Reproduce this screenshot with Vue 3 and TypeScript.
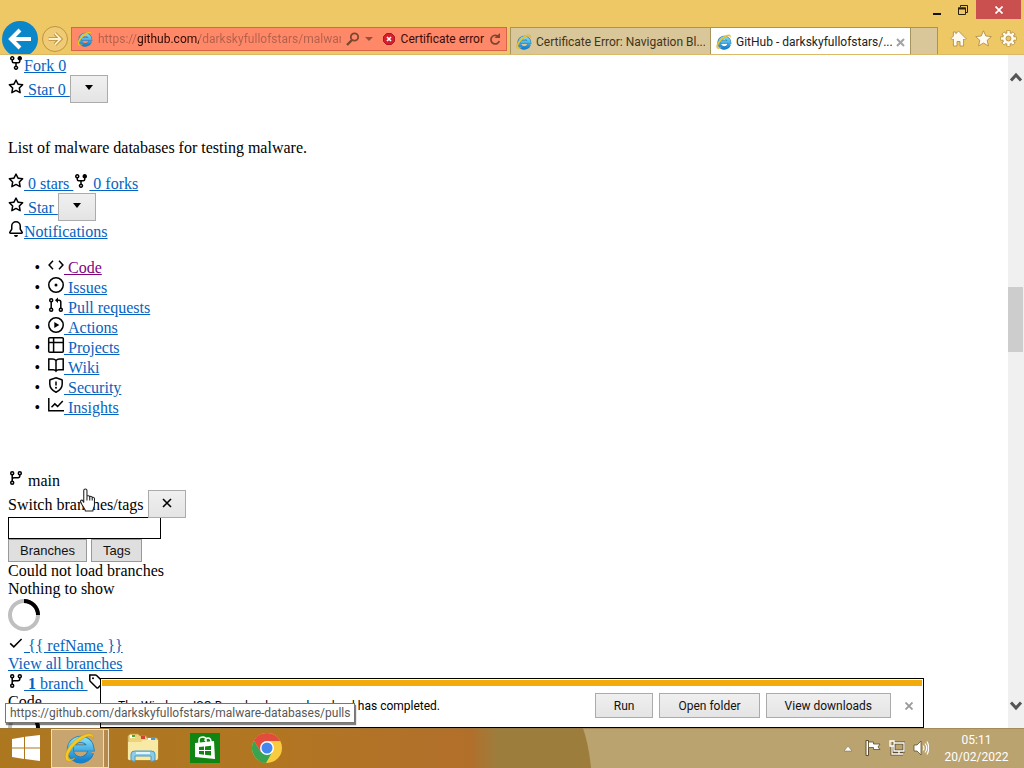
<script setup lang="ts">
import { ref } from 'vue'

interface NavItem {
  label: string
  icon: string
  visited?: boolean
}

const icons: Record<string, string> = {
  fork: '<path d="M5 3.25a.75.75 0 11-1.5 0 .75.75 0 011.5 0zm0 2.122a2.25 2.25 0 10-1.5 0v.878A2.25 2.25 0 005.75 8.5h1.5v2.128a2.251 2.251 0 101.5 0V8.5h1.5a2.25 2.25 0 002.25-2.25v-.878a2.25 2.25 0 10-1.5 0v.878a.75.75 0 01-.75.75h-4.5A.75.75 0 015 6.25v-.878zm3.75 7.378a.75.75 0 11-1.5 0 .75.75 0 011.5 0zm3-8.75a.75.75 0 100-1.5.75.75 0 000 1.5z"/>',
  star: '<path fill-rule="evenodd" d="M8 .25a.75.75 0 01.673.418l1.882 3.815 4.21.612a.75.75 0 01.416 1.279l-3.046 2.97.719 4.192a.75.75 0 01-1.088.791L8 12.347l-3.766 1.98a.75.75 0 01-1.088-.79l.72-4.194L.818 6.374a.75.75 0 01.416-1.28l4.21-.611L7.327.668A.75.75 0 018 .25zm0 2.445L6.615 5.5a.75.75 0 01-.564.41l-3.097.45 2.24 2.184a.75.75 0 01.216.664l-.528 3.084 2.769-1.456a.75.75 0 01.698 0l2.77 1.456-.53-3.084a.75.75 0 01.216-.664l2.24-2.183-3.096-.45a.75.75 0 01-.564-.41L8 2.694v.001z"/>',
  bell: '<path d="M8 16a2 2 0 001.985-1.75c.017-.137-.097-.25-.235-.25h-3.5c-.138 0-.252.113-.235.25A2 2 0 008 16z"/><path fill-rule="evenodd" d="M8 1.5A3.5 3.5 0 004.5 5v2.947c0 .346-.102.683-.294.97l-1.703 2.556c-.01.015.001.027.018.027h10.964c.017 0 .024-.015.014-.027l-1.703-2.554a1.75 1.75 0 01-.294-.97V5A3.5 3.5 0 008 1.5zM3 5a5 5 0 0110 0v2.947c0 .05.015.098.042.139l1.703 2.555A1.518 1.518 0 0113.482 13H2.518a1.518 1.518 0 01-1.263-2.36l1.703-2.554A.25.25 0 003 7.947V5z"/>',
  code: '<path class="line" d="M5 3.8L1.1 8 5 12.2M11 3.8L14.9 8 11 12.2"/>',
  issues: '<circle class="line" cx="8" cy="8" r="7.25"/><circle cx="8" cy="8" r="1.5"/>',
  pulls: '<g class="line"><circle cx="3.2" cy="3.2" r="1.5"/><circle cx="3.2" cy="12.8" r="1.5"/><circle cx="12.8" cy="12.8" r="1.5"/><path d="M3.2 4.7v6.6M12.8 11.3V5A1.8 1.8 0 0011 3.2H8"/></g><path d="M10 .5v5.4L7 3.2z"/>',
  actions: '<circle class="line" cx="8" cy="8" r="7.25"/><path d="M6.3 5l5 3-5 3z"/>',
  projects: '<path class="line" d="M1.7.8h12.6a1 1 0 011 1v12.4a1 1 0 01-1 1H1.7a1 1 0 01-1-1V1.8a1 1 0 011-1zM.8 5.6h14.4M5.6.8v14.4"/>',
  wiki: '<path class="line" d="M8 3.6C7 2.4 5.8 2 4.5 2H.8v10.8h4.4c1.2 0 2.2.5 2.8 1.4.6-.9 1.6-1.4 2.8-1.4h4.4V2h-3.7C10.200 2 9 2.400 8 3.600zM8 3.600v10.600"/>',
  security: '<path class="line" d="M8 .8l5.800 1.900a.6.6 0 01.4.6V7c0 3.700-2.300 6.500-6.200 8.200C4.100 13.500 1.800 10.700 1.800 7V3.300a.6.6 0 01.4-.6z"/><path class="line" d="M8 4.400v4"/><circle cx="8" cy="10.800" r="1"/>',
  insights: '<path class="line" d="M.8 1v12.700H16M3.500 10.300l3.300-3.400 2.800 2.500L14.800 4"/>',
  branch: '<g class="line"><circle cx="4.200" cy="3.200" r="1.500"/><circle cx="4.200" cy="12.800" r="1.500"/><circle cx="11.800" cy="3.200" r="1.500"/><path d="M4.200 4.700v6.600M4.200 9.500c0-1 .7-1.700 1.700-1.700H10c1.100 0 1.800-.7 1.800-1.700V4.700"/></g>',
  check: '<path class="line" d="M2.200 8.400l3.600 3.500 7.800-7.900"/>',
  tag: '<path class="line" d="M1.800 2h5.600c.5 0 .9.200 1.200.5l6.200 6.100a1 1 0 010 1.400l-4.700 4.700a1 1 0 01-1.400 0L2.400 8.500A2 2 0 011.800 7.200z"/><circle cx="5" cy="5.200" r="1"/>',
}

const navItems: NavItem[] = [
  { label: 'Code', icon: 'code', visited: true },
  { label: 'Issues', icon: 'issues' },
  { label: 'Pull requests', icon: 'pulls' },
  { label: 'Actions', icon: 'actions' },
  { label: 'Projects', icon: 'projects' },
  { label: 'Wiki', icon: 'wiki' },
  { label: 'Security', icon: 'security' },
  { label: 'Insights', icon: 'insights' },
]

const refTemplate = '{{ refName }}'
const address = ref('https://github.com/darkskyfullofstars/malware-databases')
const filter = ref('')
const downloadActions = ['Run', 'Open folder', 'View downloads']
</script>

<template>
  <svg class="defs" aria-hidden="true">
    <defs>
      <linearGradient id="ieBlue" x1="0" y1="0" x2="0" y2="1">
        <stop offset="0" stop-color="#7bdcf8" /><stop offset="1" stop-color="#1583cf" />
      </linearGradient>
      <symbol id="ie" viewBox="0 0 32 32">
        <path d="M26.500 20.500A10.300 10.300 0 1 1 26.800 16H10" fill="none" stroke="#2279b5" stroke-width="7" />
        <path d="M26.500 20.500A10.300 10.300 0 1 1 26.800 16H10" fill="none" stroke="url(#ieBlue)" stroke-width="5.400" />
        <path d="M3 29C-2 25 4 13 14 6 22 .5 31-.5 29 7c0-4-5-4-12 1C8 14 2 24 5 27c1 1 4 0 6-1-3 3-6 4-8 3z" fill="#f8ca20" stroke="#c69a20" stroke-width=".6" />
      </symbol>
    </defs>
  </svg>

  <div class="desktop">
    <header class="chrome">
      <div class="nav-buttons">
        <button class="back" aria-label="Back">
          <svg viewBox="0 0 36 36"><path d="M29 18H10M18 9l-9 9 9 9" fill="none" stroke="#fff" stroke-width="4" /></svg>
        </button>
        <button class="forward" aria-label="Forward">
          <svg viewBox="0 0 26 26"><path d="M6 13h12M13 7l6 6-6 6" fill="none" stroke="#b98e3b" stroke-width="4" /><path d="M6 13h12M13 7l6 6-6 6" fill="none" stroke="#fff0c8" stroke-width="2" /></svg>
        </button>
      </div>

      <form class="address-bar" @submit.prevent>
        <svg class="site-icon"><use href="#ie" /></svg>
        <input v-model="address" class="address" aria-label="Address" spellcheck="false" />
        <button class="bare" aria-label="Search">
          <svg width="14" height="14" viewBox="0 0 14 14"><circle cx="8.500" cy="5" r="3.700" fill="none" stroke="#7d4630" stroke-width="1.800" /><path d="M6 8l-5 5" stroke="#7d4630" stroke-width="2.400" /></svg>
        </button>
        <button class="bare" aria-label="Address suggestions">
          <svg width="8" height="14" viewBox="0 0 8 14"><path d="M0 5h8L4 9z" fill="#955039" /></svg>
        </button>
        <button class="certificate" type="button">
          <svg width="12" height="12" viewBox="0 0 12 12"><path d="M3.500.5h5l3 3v5l-3 3h-5l-3-3v-5z" fill="#d5202b" stroke="#b31620" /><path d="M4 4l4 4M8 4l-4 4" stroke="#fff" stroke-width="1.700" /></svg>
          Certificate error
        </button>
        <button class="bare" aria-label="Refresh">
          <svg width="12" height="13" viewBox="0 0 12 13"><path d="M8.500 3A4.300 4.300 0 1 0 10.300 8" fill="none" stroke="#7d4630" stroke-width="1.800" /><path d="M5.500 5H11V0z" fill="#7d4630" /></svg>
        </button>
      </form>

      <nav class="tabs" aria-label="Tabs">
        <button class="tab"><svg class="tab-icon"><use href="#ie" /></svg><span>Certificate Error: Navigation Bl...</span></button>
        <div class="tab active">
          <button class="tab-title"><svg class="tab-icon"><use href="#ie" /></svg><span>GitHub - darkskyfullofstars/...</span></button>
          <button class="bare" aria-label="Close tab"><svg width="9" height="9" viewBox="0 0 9 9"><path d="M1 1l7 7M8 1L1 8" stroke="#a3a3a3" stroke-width="2" /></svg></button>
        </div>
        <button class="new-tab" aria-label="New tab"></button>
      </nav>

      <div class="window-side">
        <div class="window-controls">
          <button class="win" aria-label="Minimize"><svg width="8" height="12" viewBox="0 0 8 12"><path d="M0 10h8" stroke="#17120a" stroke-width="2" /></svg></button>
          <button class="win" aria-label="Restore"><svg width="10" height="10" viewBox="0 0 10 10"><path d="M2.500 2V.5h7v7H8" fill="none" stroke="#2a200e" /><path d="M.5 3h7v6.500h-7z" fill="none" stroke="#2a200e" /><path d="M0 3.500h8" stroke="#2a200e" stroke-width="2" /></svg></button>
          <button class="win close" aria-label="Close"><svg width="8" height="8" viewBox="0 0 8 8"><path d="M.5.5l7 7M7.500.5l-7 7" stroke="#fff" stroke-width="1.700" /></svg></button>
        </div>
        <div class="tools">
          <button class="bare" aria-label="Home"><svg width="17" height="17" viewBox="0 0 17 17"><path d="M8.500 1L16 8.500l-1.500 1.500-.9-.9V16H10v-4.500H7V16H3.400V9.100l-.9.900L1 8.500 3.400 6V2h2.400v1.700z" fill="#fffaf0" stroke="#a8853d" stroke-width=".8" /></svg></button>
          <button class="bare" aria-label="Favorites"><svg width="17" height="17" viewBox="0 0 17 17"><path d="M8.500.8l2.300 5.200 5.500.6-4.100 3.700 1.200 5.600-4.900-2.900-4.900 2.900 1.200-5.600L.7 6.600 6.200 6z" fill="#fffaf0" stroke="#a8853d" stroke-width=".8" /></svg></button>
          <button class="bare" aria-label="Tools"><svg width="17" height="17" viewBox="0 0 17 17"><g stroke="#a8853d" stroke-width="4"><path d="M8.500.5v16M.5 8.500h16M2.800 2.800l11.400 11.400M14.200 2.800L2.800 14.200" /></g><circle cx="8.500" cy="8.500" r="5.700" fill="#fffaf0" stroke="#a8853d" stroke-width=".6" /><g stroke="#fffaf0" stroke-width="2.500"><path d="M8.500 1v15M1 8.500h15M3.200 3.200l10.600 10.600M13.800 3.200L3.200 13.800" /></g><circle cx="8.500" cy="8.500" r="2.500" fill="#edc366" stroke="#a8853d" stroke-width=".8" /></svg></button>
        </div>
      </div>
    </header>

    <div class="viewport">
      <main class="page">
        <div class="row"><svg class="oct" viewBox="0 0 16 16" v-html="icons.fork"></svg><a href="#fork">Fork 0</a></div>
        <div class="row"><svg class="oct" viewBox="0 0 16 16" v-html="icons.star"></svg><a href="#star" class="keep">&nbsp;Star 0 </a><button class="grey square" aria-label="Add to list"><svg width="8" height="5" viewBox="0 0 8 5"><path d="M0 0h8L4 5z" /></svg></button></div>
        <p class="about">List of malware databases for testing malware.</p>
        <div class="row"><svg class="oct" viewBox="0 0 16 16" v-html="icons.star"></svg><a href="#stars" class="keep">&nbsp;0 stars </a><span class="keep"> </span><svg class="oct" viewBox="0 0 16 16" v-html="icons.fork"></svg><a href="#forks">&nbsp;0 forks</a></div>
        <div class="row"><svg class="oct" viewBox="0 0 16 16" v-html="icons.star"></svg><a href="#star" class="keep">&nbsp;Star </a><button class="grey square" aria-label="Add to list"><svg width="8" height="5" viewBox="0 0 8 5"><path d="M0 0h8L4 5z" /></svg></button></div>
        <div class="row"><svg class="oct" viewBox="0 0 16 16" v-html="icons.bell"></svg><a href="#notifications">Notifications</a></div>

        <ul class="repo-nav">
          <li v-for="item in navItems" :key="item.label">
            <svg class="oct" viewBox="0 0 16 16" v-html="icons[item.icon]"></svg><a href="#nav" :class="{ visited: item.visited }">&nbsp;{{ item.label }}</a>
          </li>
        </ul>

        <div class="row"><svg class="oct" viewBox="0 0 16 16" v-html="icons.branch"></svg> main</div>
        <div class="row"><label for="ref-filter">Switch branches/tags</label> <button class="grey square" aria-label="Close menu"><svg width="10" height="10" viewBox="0 0 10 10"><path d="M1 1l8 8M9 1L1 9" stroke="#000" stroke-width="1.600" /></svg></button></div>
        <input id="ref-filter" v-model="filter" class="filter" type="text" />
        <div class="ref-tabs"><button class="grey">Branches</button><button class="grey">Tags</button></div>
        <div class="notice">Could not load branches</div>
        <div class="notice">Nothing to show</div>
        <svg class="spinner" viewBox="0 0 32 32"><circle cx="16" cy="16" r="14" fill="none" stroke="#bfbfbf" stroke-width="4" /><path d="M16 2a14 14 0 0 1 14 14" fill="none" stroke="#000" stroke-width="4" /></svg>
        <div class="row"><svg class="oct" viewBox="0 0 16 16" v-html="icons.check"></svg><a href="#ref">&nbsp;{{ refTemplate }}</a></div>
        <div><a href="#branches">View all branches</a></div>
        <div class="row"><svg class="oct" viewBox="0 0 16 16" v-html="icons.branch"></svg><a href="#branches" class="keep">&nbsp;<strong>1</strong> branch </a><svg class="oct" viewBox="0 0 16 16" v-html="icons.tag"></svg></div>
        <div>Code</div>
        <svg class="spinner" viewBox="0 0 32 32"><circle cx="16" cy="16" r="14" fill="none" stroke="#bfbfbf" stroke-width="4" /><path d="M16 2a14 14 0 0 1 14 14" fill="none" stroke="#000" stroke-width="4" /></svg>
      </main>

      <div class="scrollbar">
        <svg width="14" height="12" viewBox="0 0 14 12"><path d="M2 9.500l5-5.500 5 5.500" fill="none" stroke="#555" stroke-width="3" /></svg>
        <div class="track"><div class="thumb"></div></div>
        <svg width="14" height="12" viewBox="0 0 14 12"><path d="M2 2.500L7 8l5-5.500" fill="none" stroke="#555" stroke-width="3" /></svg>
      </div>

      <svg class="pointer" viewBox="0 0 14 24" preserveAspectRatio="none"><path d="M3.500 14V2.500a1.500 1.500 0 0 1 3 0V8c.5-1 2.400-.8 2.600.5.600-.9 2.100-.5 2.300.600.800-.6 2.100-.1 2.100 1.200V16c0 2-1.200 3.300-1.500 6H5c-.3-2-1.800-3.600-3-5.600L.6 13.300c-.4-1.500 1.200-2.200 2-1.100z" fill="#fff" stroke="#222" /><path d="M6.500 8v4M9.100 8.800V12M11.400 9.600V12" stroke="#222" /></svg>

      <section class="download" aria-label="Download">
        <span class="message">The Windows ISO Downloader.exe download has completed.</span>
        <button v-for="action in downloadActions" :key="action" class="grey action">{{ action }}</button>
        <button class="bare dismiss" aria-label="Dismiss"><svg width="8" height="8" viewBox="0 0 8 8"><path d="M.5.5l7 7M7.500.5l-7 7" stroke="#999" stroke-width="1.800" /></svg></button>
      </section>
      <div class="status">https://github.com/darkskyfullofstars/malware-databases/pulls</div>
    </div>

    <footer class="taskbar">
      <svg class="wallpaper" viewBox="0 0 1024 40" preserveAspectRatio="none" aria-hidden="true">
        <defs><linearGradient id="wood"><stop offset="0" stop-color="#ad7720" /><stop offset=".55" stop-color="#b17622" /><stop offset=".95" stop-color="#b26f2b" /><stop offset="1" stop-color="#9f7c3b" /></linearGradient></defs>
        <path d="M0 0h1024v40H0z" fill="#baa36f" /><path d="M0 0h583q6 18 8 40H0z" fill="#9d7d3b" /><path d="M0 0h495v40H0z" fill="url(#wood)" /><path d="M0 0h1024v1H0z" fill="#8d7443" opacity=".5" />
      </svg>
      <button class="task start" aria-label="Start"><svg width="28" height="26" viewBox="0 0 28 26"><path d="M0 4l12-2v10.500H0zM13 1.800L28 0v12.500H13zM0 13.500h12V24L0 22zM13 13.500h15V26l-15-2z" fill="#fff" /></svg></button>
      <button class="task current" aria-label="Internet Explorer"><svg width="32" height="32"><use href="#ie" /></svg></button>
      <button class="task" aria-label="File Explorer">
        <svg width="32" height="30" viewBox="0 0 32 30"><path d="M1 3l2-2h8l2 2h6l1 2h10l1 2v19l-2 1H2l-1-1z" fill="#ecd27b" stroke="#bd9b46" stroke-width=".8" /><path d="M3 2h5v3H3zM21 5h6v3h-6z" fill="#fff" /><path d="M5 2h3v2H5z" fill="#48a83e" /><path d="M14 3h4v3h-4z" fill="#d84236" /><path d="M24 5h4v2h-4z" fill="#479bd7" /><path d="M1 9h13l2-2h15v18l-1 2H2l-1-1z" fill="#f8e9a5" /><path d="M4 27v-6q0-3 4-3h16q4 0 4 3v6l-4 2v-6H8v6z" fill="#8ccbea" stroke="#529abe" /><path d="M9 20h14" stroke="#dff5ff" stroke-width="2" /></svg>
      </button>
      <button class="task" aria-label="Store">
        <svg width="30" height="30" viewBox="0 0 30 30"><path d="M0 0h30v30H0z" fill="#118511" /><path d="M5 10l19-2 1 18-20-2z" fill="#fff" /><path d="M9 10V7q0-3 4-3 3 0 3 3v2M15 8q0-3 3-3t3 4" fill="none" stroke="#fff" stroke-width="1.500" /><path d="M9 14l5-.5V17H9zM15 13.400l6-.6V17h-6zM9 18h5v3.700L9 21zM15 18h6v4.600l-6-.8z" fill="#118511" /></svg>
      </button>
      <button class="task" aria-label="Chrome">
        <svg width="30" height="30" viewBox="0 0 30 30"><circle cx="15" cy="15" r="15" fill="#f8cc3e" /><path d="M15 15L2 7.500A15 15 0 0 1 28 8H15z" fill="#e34b3c" /><path d="M2 7.500A15 15 0 0 0 14 30l6.500-11.500L15 15 8.500 18.500z" fill="#38a452" /><path d="M2 7.500a15 15 0 0 1 26 .5H15l-6.500 10.500z" fill="#e34b3c" /><circle cx="15" cy="15" r="7" fill="#fff" /><circle cx="15" cy="15" r="5.500" fill="#4286f0" /></svg>
      </button>
      <div class="tray">
        <button class="bare overflow" aria-label="Show hidden icons"><svg width="8" height="16" viewBox="0 0 8 16"><path d="M0 11l4-5 4 5z" fill="#fff" stroke="#75633a" stroke-width=".5" /></svg></button>
        <button class="bare" aria-label="Action Center"><svg width="16" height="16" viewBox="0 0 16 16"><path d="M1 .5h2.500v15H1z" fill="#fff" stroke="#5e4e2c" /><path d="M3.500 2h5v2h6.500l-2 3 2 2.500H8.500v-2h-5z" fill="#fff" stroke="#5e4e2c" stroke-width=".8" /></svg></button>
        <button class="bare" aria-label="Network"><svg width="16" height="16" viewBox="0 0 16 16"><path d="M5 3h10v8H5zM8 14h6M10 11v3M3 6v8h5" fill="none" stroke="#5e4e2c" stroke-width="3" /><path d="M5 3h10v8H5zM8 14h6M10 11v3M3 6v8h5M1 1h4v5H1z" fill="none" stroke="#fff" stroke-width="1.300" /></svg></button>
        <button class="bare" aria-label="Volume"><svg width="16" height="16" viewBox="0 0 16 16"><path d="M1 5h3l4-4v14l-4-4H1z" fill="#fff" stroke="#5e4e2c" stroke-width=".8" /><path d="M10 5.500q2 2.500 0 5M12 3.500q3.500 4.500 0 9M14 1.500q3.500 6.500 0 13" fill="none" stroke="#fff" stroke-width="1.200" /></svg></button>
      </div>
      <div class="clock"><time>05:11</time><time>20/02/2022</time></div>
    </footer>
  </div>
</template>

<style>
html, body { margin: 0; overflow: hidden; }
</style>

<style scoped>
* { box-sizing: border-box; }
.defs { position: absolute; width: 0; height: 0; }
.desktop { display: flex; flex-direction: column; height: 100vh; font-family: Roboto, "Open Sans", sans-serif; font-size: 12px; color: #000; background: #fff; }
button { font: inherit; color: inherit; margin: 0; padding: 0; cursor: default; }
svg { flex: none; }

.chrome { display: flex; align-items: flex-end; height: 55px; flex: none; background: #efc866; border-bottom: 1px solid #dcb968; overflow: hidden; }
.nav-buttons { display: flex; align-items: center; gap: 4px; width: 71px; height: 36px; padding-left: 2px; margin-bottom: -3px; flex: none; }
.back { width: 36px; height: 36px; border: 0; border-radius: 50%; background: #0b86c8; }
.back svg { display: block; width: 36px; height: 36px; }
.forward { width: 26px; height: 26px; border: 1px solid #c1933f; border-radius: 50%; background: #f0cb76; }
.forward svg { display: block; width: 24px; height: 24px; }
.address-bar { display: flex; align-items: center; gap: 5px; flex: 1; min-width: 0; height: 24px; margin-bottom: 3px; padding: 0 5px; background: #ff8869; border: 1px solid #d9644a; }
.site-icon, .tab-icon { width: 16px; height: 16px; }
.address { flex: 1; min-width: 0; height: 22px; padding: 0; border: 0; outline: 0; font: inherit; color: transparent; background: linear-gradient(to right, #b3604b 0 39px, #2b0903 39px 101px, #b3604b 101px); -webkit-background-clip: text; background-clip: text; }
.bare { display: flex; align-items: center; justify-content: center; border: 0; background: none; }
.certificate { display: flex; align-items: center; gap: 6px; margin-left: 5px; border: 0; background: none; color: #3b0d05; white-space: nowrap; }
.tabs { display: flex; height: 27px; margin-left: 3px; flex: none; }
.tab { display: flex; align-items: center; gap: 4px; width: 201px; padding: 2px 5px 0; border: 1px solid #a6945f; border-bottom: 0; background: #d9c699; color: #3f3521; white-space: nowrap; text-align: left; }
.tab.active { width: 200px; background: #fff; color: #222; border-left: 0; }
.tab span { flex: 1; overflow: hidden; }
.tab-title { display: flex; align-items: center; gap: 4px; flex: 1; min-width: 0; border: 0; background: none; text-align: left; }
.new-tab { width: 28px; margin-left: -1px; border: 1px solid #a6945f; border-bottom: 0; background: #d9c699; }
.window-side { display: flex; flex-direction: column; flex: none; width: 86px; height: 54px; }
.window-controls { display: flex; justify-content: flex-end; height: 19px; margin-left: -14px; padding-right: 3px; }
.win { display: flex; align-items: center; justify-content: center; width: 26px; border: 0; background: none; }
.win.close { width: 45px; margin-left: 1px; background: #c9504f; }
.tools { display: flex; align-items: center; justify-content: flex-end; gap: 8px; height: 35px; padding: 4px 7px 0 0; }

.viewport { position: relative; display: flex; flex: 1; min-height: 0; overflow: hidden; }
.page { flex: 1; font: 16px/18px "Liberation Serif", "Times New Roman", serif; padding: 0 8px; overflow: hidden; }
.page a { color: #0563c1; text-decoration: underline; }
.page a.visited { color: #800080; }
.keep { white-space: pre-wrap; }
.oct { width: 16px; height: 16px; vertical-align: baseline; overflow: visible; fill: #000; }
.oct :deep(.line) { fill: none; stroke: #000; stroke-width: 1.5px; }
.grey { border: 1px solid #ababab; background: linear-gradient(#f0f0f0, #e4e4e4); color: #111; }
.square { width: 38px; height: 28px; vertical-align: -7px; }
.square svg { display: block; margin: 0 auto 3px; }
.about { margin: 36px 0 16px; }
.repo-nav { margin: 16px 0 53px; padding-left: 40px; list-style-type: "•\00a0\00a0"; }
.filter { display: block; width: 153px; height: 22px; margin-top: -1px; padding: 0 2px; border: 1px solid #000; background: #fff; font: inherit; }
.ref-tabs { display: flex; gap: 4px; height: 23px; font: 13px "Liberation Sans", Arial, sans-serif; }
.ref-tabs .grey { padding: 0 11px; border-color: #999; background: #dfdfdf; }
.notice { line-height: 18px; }
.spinner { display: block; width: 32px; height: 32px; margin: 1px 0 4px; }

.scrollbar { display: flex; flex-direction: column; align-items: center; width: 16px; padding: 16px 0; background: #f0f0f0; }
.track { display: flex; flex-direction: column; flex: 1; width: 100%; padding-top: 204px; }
.thumb { height: 65px; margin-right: 1px; background: #cdcdcd; }
.pointer { position: absolute; left: 80px; top: 433px; width: 15px; height: 25px; }

.download { position: absolute; left: 100px; right: 100px; bottom: 0; display: flex; align-items: center; gap: 6px; height: 50px; padding: 5px 8px 0 17px; border: 1px solid #000; background: #fff; }
.download::before { content: ""; position: absolute; left: 1px; right: 1px; top: 1px; height: 6px; background: #f2ab08; }
.message { flex: 1; white-space: nowrap; }
.action { height: 25px; padding: 0 18px; }
.dismiss { width: 12px; height: 16px; margin-left: 6px; }
.status { position: absolute; left: 5px; bottom: 5px; height: 20px; padding: 0 4px; border: 1px solid #777; background: #fff; box-shadow: 1px 2px 1px rgba(0, 0, 0, .5); color: #575757; line-height: 18px; white-space: nowrap; }

.taskbar { position: relative; display: flex; align-items: center; height: 40px; flex: none; color: #fff; }
.wallpaper { position: absolute; inset: 0; width: 100%; height: 100%; }
.task { position: relative; display: flex; align-items: center; justify-content: center; width: 62px; height: 40px; border: 0; background: none; }
.start { width: 51px; }
.task.current { width: 58px; height: 39px; margin-right: 3px; background: #c8a46e; border: 1px solid #f0dfbd; box-shadow: inset -4px 0 #b38b50, inset -5px 0 #eedcb9; }
.tray { position: relative; display: flex; align-items: center; gap: 8px; margin-left: auto; }
.overflow { margin-right: 5px; }
.clock { position: relative; display: flex; flex-direction: column; align-items: center; width: 95px; padding-top: 2px; line-height: 17px; }
</style>
